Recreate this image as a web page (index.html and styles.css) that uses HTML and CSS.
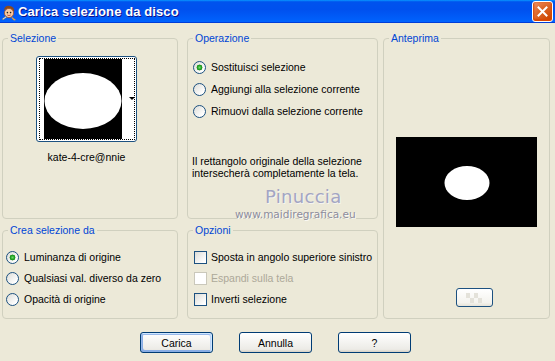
FILE: index.html
```html
<!DOCTYPE html>
<html lang="it">
<head>
    <meta charset="UTF-8">
    <meta name="viewport" content="width=device-width, initial-scale=1.0">
    <title>Carica selezione da disco</title>
    <link rel="stylesheet" href="styles.css">
</head>
<body>
<div class="window">
    <!-- Barra del titolo -->
    <div class="titlebar">
        <svg class="app-icon" width="16" height="17" viewBox="0 0 16 17">
            <path d="M3 6 Q4 1 9 2 Q14 3 13 8 L12 7 Q10 4 6 5 Z" fill="#8a4a1c"/>
            <circle cx="8" cy="9" r="4.6" fill="#f6c9a0" stroke="#a0522d" stroke-width="0.8"/>
            <circle cx="6.4" cy="8.6" r="0.8" fill="#222"/>
            <circle cx="9.6" cy="8.6" r="0.8" fill="#222"/>
            <path d="M6.3 11 Q8 12.3 9.7 11" stroke="#c0392b" stroke-width="0.8" fill="none"/>
            <path d="M1 15 L5 12 L6 13 L2 16 Z" fill="#f0f0f0" stroke="#555" stroke-width="0.5"/>
            <path d="M11 13 L15 16 L13 16.5 L10.5 14 Z" fill="#e8a33a"/>
        </svg>
        <span class="title">Carica selezione da disco</span>
        <div class="close">
            <svg width="11" height="11" viewBox="0 0 11 11">
                <path d="M1.5 1.5 L9.5 9.5 M9.5 1.5 L1.5 9.5" stroke="#fff" stroke-width="2" stroke-linecap="square"/>
            </svg>
        </div>
    </div>

    <div class="client">
        <div class="groups">
            <!-- Selezione -->
            <section class="group selection">
                <div class="group-title">Selezione</div>
                <div class="thumb-wrap">
                    <div class="thumb">
                        <div class="thumb-focus">
                            <svg class="thumb-img" width="78" height="80" viewBox="0 0 78 80">
                                <rect width="78" height="80" fill="#000"/>
                                <ellipse cx="39" cy="42" rx="38.5" ry="28" fill="#fff"/>
                            </svg>
                            <span class="thumb-strip"><span class="thumb-arrow"></span></span>
                        </div>
                    </div>
                    <div class="thumb-name">kate-4-cre@nnie</div>
                </div>
            </section>

            <!-- Operazione -->
            <section class="group operation">
                <div class="group-title">Operazione</div>
                <div class="choices">
                    <div class="choice"><span class="radio checked"></span>Sostituisci selezione</div>
                    <div class="choice"><span class="radio"></span>Aggiungi alla selezione corrente</div>
                    <div class="choice"><span class="radio"></span>Rimuovi dalla selezione corrente</div>
                </div>
                <p class="note">Il rettangolo originale della selezione<br>intersecherà completamente la tela.</p>
                <div class="watermark">
                    <div class="wm-name">Pinuccia</div>
                    <div class="wm-site">www.maidiregrafica.eu</div>
                </div>
            </section>

            <!-- Anteprima -->
            <section class="group preview">
                <div class="group-title">Anteprima</div>
                <svg class="preview-img" width="141" height="90" viewBox="0 0 141 90">
                    <rect width="141" height="90" fill="#000"/>
                    <ellipse cx="71" cy="46" rx="22.5" ry="17" fill="#fff"/>
                </svg>
                <div class="preview-btn">
                    <svg width="16" height="10" viewBox="0 0 16 10">
                        <rect x="0" y="0" width="4" height="5" fill="#e4e2da"/>
                        <rect x="8" y="0" width="4" height="5" fill="#e4e2da"/>
                        <rect x="4" y="5" width="4" height="5" fill="#e4e2da"/>
                        <rect x="12" y="5" width="4" height="5" fill="#e4e2da"/>
                    </svg>
                </div>
            </section>

            <!-- Crea selezione da -->
            <section class="group source">
                <div class="group-title">Crea selezione da</div>
                <div class="choices">
                    <div class="choice"><span class="radio checked"></span>Luminanza di origine</div>
                    <div class="choice"><span class="radio"></span>Qualsiasi val. diverso da zero</div>
                    <div class="choice"><span class="radio"></span>Opacità di origine</div>
                </div>
            </section>

            <!-- Opzioni -->
            <section class="group options">
                <div class="group-title">Opzioni</div>
                <div class="choices">
                    <div class="choice"><span class="check"></span>Sposta in angolo superiore sinistro</div>
                    <div class="choice disabled"><span class="check"></span>Espandi sulla tela</div>
                    <div class="choice"><span class="check"></span>Inverti selezione</div>
                </div>
            </section>
        </div>

        <!-- Pulsanti -->
        <div class="actions">
            <button class="btn default">Carica</button>
            <button class="btn">Annulla</button>
            <button class="btn">?</button>
        </div>
    </div>
</div>
</body>
</html>
```

FILE: styles.css
```css
/* Finestra stile Windows XP */
body {
    margin: 0;
    background: #ECE9D8;
    font-family: 'Liberation Sans', Arial, sans-serif;
    font-size: 10.5px;
    color: #000;
}

.window {
    width: 555px;
    height: 361px;
    overflow: hidden;
}

/* Barra del titolo */
.titlebar {
    height: 23px;
    display: flex;
    align-items: center;
    padding-left: 1px;
    background: linear-gradient(180deg, #0997ff, #0053ee 8%, #0050ee 40%, #0060fb 88%, #0066ff 93%, #005bff 95%, #003dd7 96%, #003dd7);
}

.app-icon {
    margin-top: 2px;
}

.title {
    margin-left: 1px;
    color: #fff;
    font-weight: bold;
    font-size: 13px;
    letter-spacing: 0.1px;
    text-shadow: 1px 1px #0f1089;
}

.close {
    margin-left: auto;
    margin-right: 2px;
    width: 19px;
    height: 19px;
    border: 1px solid #fff;
    border-radius: 3px;
    display: flex;
    justify-content: center;
    align-items: center;
    background: radial-gradient(circle at 90% 90%, #cc4600 0, #dc6527 55%, #e8804e 80%, #ee9c73);
    box-shadow: inset 0 -1px 2px 1px #da4600;
}

/* Area client */
.client {
    padding: 15px 0 0 2px;
}

.groups {
    display: grid;
    grid-template-columns: 176px 191px 167px;
    grid-template-rows: 181px 89px;
    column-gap: 9px;
    row-gap: 11px;
}

.group {
    box-sizing: border-box;
    border: 1px solid #D0D0BF;
    border-radius: 4px;
    display: flex;
    flex-direction: column;
}

.group-title {
    align-self: flex-start;
    margin: -7px 0 0 5px;
    padding: 0 2px;
    line-height: 13px;
    background: #ECE9D8;
    color: #0046D5;
}

.selection { grid-column: 1; grid-row: 1; }
.operation { grid-column: 2; grid-row: 1; position: relative; }
.preview {
    grid-column: 3;
    grid-row: 1 / span 2;
    margin-left: -4px;
    width: 167px;
}
.source { grid-column: 1; grid-row: 2; }
.options { grid-column: 2; grid-row: 2; }

/* Miniatura selezione */
.thumb-wrap {
    margin: 11px 0 0 33px;
    width: 101px;
    display: flex;
    flex-direction: column;
    align-items: center;
}

.thumb {
    box-sizing: border-box;
    width: 101px;
    height: 86px;
    padding: 1px 1px 1px 2px;
    border: 1px solid #1C5180;
    border-radius: 3px;
    background: #fff;
}

.thumb-focus {
    display: flex;
    height: 80px;
    padding-left: 4px;
    border: 1px dotted #000;
}

.thumb-strip {
    flex: 1;
    position: relative;
    background: #fff;
}

.thumb-arrow {
    position: absolute;
    right: -1px;
    top: 38px;
    border-left: 3px solid transparent;
    border-right: 3px solid transparent;
    border-top: 3px solid #000;
}

.thumb-name {
    margin-top: 9px;
    line-height: 13px;
}

/* Radio e caselle */
.choices {
    display: flex;
    flex-direction: column;
}

.operation .choices {
    margin-top: 16px;
    padding-left: 5px;
    gap: 9px;
}

.source .choices {
    margin-top: 14px;
    padding-left: 3px;
    gap: 8px;
}

.options .choices {
    margin-top: 14px;
    padding-left: 6px;
    gap: 8px;
}

.choice {
    display: flex;
    align-items: center;
    height: 13px;
    line-height: 13px;
    white-space: nowrap;
}

.radio {
    box-sizing: border-box;
    width: 13px;
    height: 13px;
    margin-right: 5px;
    border: 1px solid #1C5180;
    border-radius: 50%;
    background: linear-gradient(135deg, #DCDCD7, #fff 80%);
}

.radio.checked {
    background: radial-gradient(circle at 50% 50%, #6fd86f 0, #21A121 2px, #1b8e1b 2.7px, transparent 3.2px),
                linear-gradient(135deg, #DCDCD7, #fff 80%);
}

.check {
    box-sizing: border-box;
    width: 13px;
    height: 13px;
    margin-right: 4px;
    border: 1px solid #1C5180;
    background: linear-gradient(135deg, #DCDCD7, #fff 85%);
}

.choice.disabled {
    color: #ACA899;
}

.choice.disabled .check {
    border-color: #CAC8BB;
    background: #fff;
}

.note {
    margin: 37px 0 0 4px;
    line-height: 12px;
}

/* Filigrana */
.watermark {
    position: absolute;
    left: 47px;
    top: 147px;
    font-family: 'DejaVu Sans', sans-serif;
}

.wm-name {
    margin-left: 30px;
    font-size: 18px;
    line-height: 22px;
    color: #A3A5C3;
    letter-spacing: 0.3px;
    text-shadow: 1px 1px #f6f5f0;
}

.wm-site {
    font-size: 10.5px;
    line-height: 12px;
    color: #8c8c9c;
    text-shadow: 1px 1px #fbfaf5;
}

/* Anteprima */
.preview-img {
    align-self: center;
    margin-top: 92px;
}

.preview-btn {
    box-sizing: border-box;
    align-self: center;
    margin: 61px 0 0 15px;
    width: 37px;
    height: 19px;
    border: 1px solid #1C5180;
    border-radius: 3px;
    background: linear-gradient(180deg, #fff, #F4F3EE 80%, #E6E3D8);
    display: flex;
    justify-content: center;
    align-items: center;
}

/* Pulsanti */
.actions {
    display: flex;
    gap: 26px;
    margin-top: 13px;
    padding-left: 138px;
}

.btn {
    box-sizing: border-box;
    width: 73px;
    height: 21px;
    padding: 0;
    font-family: 'Liberation Sans', Arial, sans-serif;
    font-size: 10.5px;
    color: #000;
    border: 1px solid #003C74;
    border-radius: 3px;
    background: linear-gradient(180deg, #fff, #ECEBE6 86%, #D6D0C5);
}

.btn.default {
    box-shadow: inset -1px 1px #cee7ff, inset 1px 2px #98b8ea, inset -2px 2px #bcd4f6, inset 1px -1px #89ade4, inset 2px -2px #89ade4;
}
```
